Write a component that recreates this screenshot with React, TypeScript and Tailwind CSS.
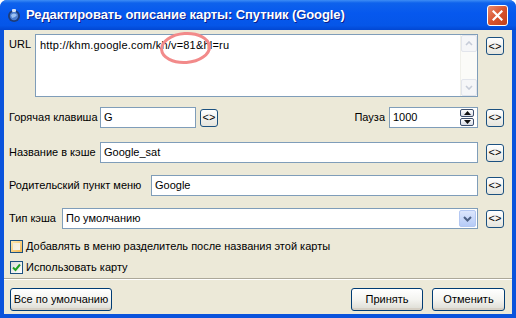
import React from "react";

function SmallBtn() {
  return (
    <div className="w-[18px] h-[18px] shrink-0 rounded-[3px] border border-[#1C5180] bg-linear-to-b from-white to-[#E6E5DD] flex items-center justify-center text-[11px] leading-none text-black">
      &lt;&gt;
    </div>
  );
}

function Field({ w, value }: { w: string; value: string }) {
  return (
    <div className={`${w} h-[21px] shrink-0 border border-[#7F9DB9] bg-white flex items-center px-[3px] whitespace-nowrap`}>
      {value}
    </div>
  );
}

function XpButton({ w, children }: { w: string; children: React.ReactNode }) {
  return (
    <div className={`${w} h-[23px] shrink-0 rounded-[3px] border border-[#003C74] bg-linear-to-b from-white via-[#F4F4F0] to-[#DCDBD3] flex items-center justify-center whitespace-nowrap shadow-[inset_0_-2px_0_#D6D0C5]`}>
      {children}
    </div>
  );
}

export default function App() {
  return (
    <div className="w-[516px] h-[318px] flex flex-col bg-[#0A53DC] rounded-t-[7px] overflow-hidden font-['Liberation_Sans',Arial,sans-serif] text-black relative">
      {/* Title bar */}
      <div className="h-[30px] shrink-0 flex items-center pl-[6px] pr-[8px] bg-[linear-gradient(to_bottom,#3D8DF5_0%,#0E62EC_10%,#0658EE_45%,#0556E8_85%,#0247D2_100%)]">
        <svg width="16" height="16" viewBox="0 0 16 16" className="mr-[3px]">
          <circle cx="8" cy="9" r="6" fill="#1E3C78" />
          <circle cx="8" cy="9" r="4.2" fill="#4E7FD0" />
          <path d="M5 8 Q8 5 11 8 Q9 11 6 11 Z" fill="#9DC2F2" />
          <rect x="6" y="2" width="4" height="3" rx="1" fill="#D8E4F6" />
        </svg>
        <div className="text-white font-bold text-[13px] tracking-[-0.1px] whitespace-nowrap [text-shadow:1px_1px_0_#0A1E8C] ml-[1px]">
          Редактировать описание карты: Спутник (Google)
        </div>
        <div className="flex-1" />
        <div className="w-[21px] h-[21px] rounded-[3px] border border-white bg-linear-to-br from-[#E88A6C] via-[#D9532D] to-[#C2401C] flex items-center justify-center">
          <svg width="11" height="11" viewBox="0 0 11 11">
            <path d="M1.5 1.5 L9.5 9.5 M9.5 1.5 L1.5 9.5" stroke="white" strokeWidth="2.2" strokeLinecap="square" />
          </svg>
        </div>
      </div>

      {/* Content */}
      <div className="flex-1 mx-[4px] mb-[4px] bg-[#ECE9D8] flex flex-col text-[11px] leading-[13px]">
        {/* URL row */}
        <div className="flex items-start mt-[4px] pl-[5px] pr-[8px]">
          <div className="w-[26px] shrink-0 mt-[4px]">URL</div>
          <div className="w-[443px] h-[63px] shrink-0 border border-[#7F9DB9] bg-white flex">
            <div className="flex-1 pl-[4px] pt-[4px] whitespace-nowrap tracking-[0.2px]">http://khm.google.com/kh/v=81&amp;hl=ru</div>
            <div className="w-[17px] flex flex-col bg-[#FBFBF8] border-l border-[#F0F0EA]">
              <div className="h-[17px] rounded-[2px] border border-[#E2E5EC] bg-[#F5F6F8] flex items-center justify-center">
                <svg width="8" height="5" viewBox="0 0 8 5"><path d="M1 4 L4 1 L7 4" stroke="#C6CCD8" strokeWidth="1.6" fill="none" /></svg>
              </div>
              <div className="flex-1" />
              <div className="h-[17px] rounded-[2px] border border-[#E2E5EC] bg-[#F5F6F8] flex items-center justify-center">
                <svg width="8" height="5" viewBox="0 0 8 5"><path d="M1 1 L4 4 L7 1" stroke="#C6CCD8" strokeWidth="1.6" fill="none" /></svg>
              </div>
            </div>
          </div>
          <div className="ml-[8px] mt-[3px]"><SmallBtn /></div>
        </div>

        {/* Hotkey / pause row */}
        <div className="flex items-center mt-[10px] pl-[5px] pr-[8px]">
          <div className="w-[91px] shrink-0 whitespace-nowrap">Горячая клавиша</div>
          <Field w="w-[96px]" value="G" />
          <div className="ml-[4px]"><SmallBtn /></div>
          <div className="flex-1" />
          <div className="mr-[4px] whitespace-nowrap">Пауза</div>
          <div className="w-[89px] h-[21px] shrink-0 border border-[#7F9DB9] bg-white flex items-center pl-[3px] pr-[3px]">
            <div className="flex-1">1000</div>
            <div className="w-[14px] h-[17px] flex flex-col gap-[1px]">
              <div className="flex-1 rounded-[2px] border border-[#3C4E6C] bg-linear-to-b from-white to-[#D8DCE6] flex items-center justify-center">
                <svg width="7" height="4" viewBox="0 0 7 4"><path d="M0 4 L3.5 0 L7 4 Z" fill="#111" /></svg>
              </div>
              <div className="flex-1 rounded-[2px] border border-[#3C4E6C] bg-linear-to-b from-white to-[#D8DCE6] flex items-center justify-center">
                <svg width="7" height="4" viewBox="0 0 7 4"><path d="M0 0 L3.5 4 L7 0 Z" fill="#111" /></svg>
              </div>
            </div>
          </div>
          <div className="ml-[8px]"><SmallBtn /></div>
        </div>

        {/* Cache name */}
        <div className="flex items-center mt-[14px] pl-[5px] pr-[8px]">
          <div className="w-[91px] shrink-0 whitespace-nowrap">Название в кэше</div>
          <Field w="w-[378px]" value="Google_sat" />
          <div className="ml-[8px]"><SmallBtn /></div>
        </div>

        {/* Parent menu */}
        <div className="flex items-center mt-[12px] pl-[5px] pr-[8px]">
          <div className="w-[142px] shrink-0 whitespace-nowrap">Родительский пункт меню</div>
          <Field w="w-[327px]" value="Google" />
          <div className="ml-[8px]"><SmallBtn /></div>
        </div>

        {/* Cache type */}
        <div className="flex items-center mt-[12px] pl-[5px] pr-[8px]">
          <div className="w-[53px] shrink-0 whitespace-nowrap">Тип кэша</div>
          <div className="w-[416px] h-[21px] shrink-0 border border-[#7F9DB9] bg-white flex items-center pl-[3px] pr-[1px]">
            <div className="flex-1">По умолчанию</div>
            <div className="w-[17px] h-[17px] rounded-[2px] border border-[#B4C8F2] bg-linear-to-b from-[#DCE6FC] to-[#B6CBF7] flex items-center justify-center">
              <svg width="9" height="6" viewBox="0 0 9 6"><path d="M1 1 L4.5 4.5 L8 1" stroke="#4D6185" strokeWidth="2" fill="none" /></svg>
            </div>
          </div>
          <div className="ml-[8px]"><SmallBtn /></div>
        </div>

        {/* Checkboxes */}
        <div className="flex items-center mt-[10px] pl-[6px] h-[14px]">
          <div className="w-[13px] h-[13px] shrink-0 border border-[#1C5180] bg-linear-to-br from-[#FCE9B4] to-[#F5B84A] p-[2px]">
            <div className="w-full h-full bg-linear-to-br from-[#F3ECD9] to-[#F8F4E8]" />
          </div>
          <div className="ml-[3px] whitespace-nowrap">Добавлять в меню разделитель после названия этой карты</div>
        </div>
        <div className="flex items-center mt-[7px] pl-[6px] h-[14px]">
          <div className="w-[13px] h-[13px] shrink-0 border border-[#1C5180] bg-linear-to-br from-[#DCDCD7] to-white flex items-center justify-center">
            <svg width="9" height="9" viewBox="0 0 9 9"><path d="M1 4.5 L3.5 7 L8 1.5" stroke="#21A121" strokeWidth="2" fill="none" /></svg>
          </div>
          <div className="ml-[3px] whitespace-nowrap">Использовать карту</div>
        </div>

        {/* Separator */}
        <div className="mt-[4px] border-t border-[#ACA899] border-b border-b-white" />

        {/* Buttons */}
        <div className="flex items-center mt-[8px] pl-[6px] pr-[7px]">
          <XpButton w="w-[102px]">Все по умолчанию</XpButton>
          <div className="flex-1" />
          <XpButton w="w-[72px]">Принять</XpButton>
          <div className="w-[9px] shrink-0" />
          <XpButton w="w-[73px]">Отменить</XpButton>
        </div>
      </div>

      {/* Annotation ellipse */}
      <svg className="absolute left-0 top-0 pointer-events-none" width="516" height="318">
        <ellipse cx="185.5" cy="48" rx="24" ry="14.5" fill="none" stroke="#F28A8A" strokeWidth="3" transform="rotate(-4 185.5 48)" />
      </svg>
    </div>
  );
}
